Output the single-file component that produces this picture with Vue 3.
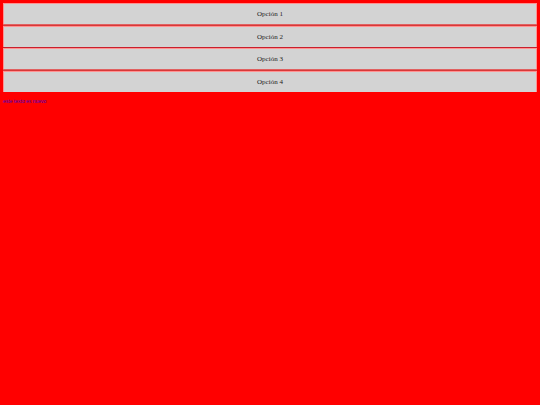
<template>
  <main class="page">
    <ul class="menu">
      <li v-for="option in options" :key="option" class="menu-item">{{ option }}</li>
    </ul>
    <p class="note">este texto es nuevo</p>
  </main>
</template>

<script setup>
const options = ["Opción 1", "Opción 2", "Opción 3", "Opción 4"];
</script>

<style>
body {
  background: #ff0000;
}
</style>

<style scoped>
.page {
  padding: 3px;
  font-family: "Liberation Serif", "Times New Roman", serif;
}

.menu {
  margin: 0;
  padding: 0;
  list-style: none;
}

.menu-item {
  margin-bottom: 1px;
  border: 1px solid #ff9292;
  border-bottom: 0;
  background: lightgray;
  background-clip: padding-box;
  box-shadow: 0 1px #c8202c;
  color: #222222;
  font-size: 7px;
  line-height: 20px;
  text-align: center;
}

.menu-item:nth-child(odd) {
  margin-bottom: 2px;
  box-shadow: 0 1px #e06060, 0 2px #d83838;
}

.menu-item:last-child {
  box-shadow: none;
}

.note {
  margin: 6px 0 0;
  color: #4000c0;
  font-family: "Liberation Sans", Arial, sans-serif;
  font-size: 5px;
  line-height: 7px;
}
</style>
